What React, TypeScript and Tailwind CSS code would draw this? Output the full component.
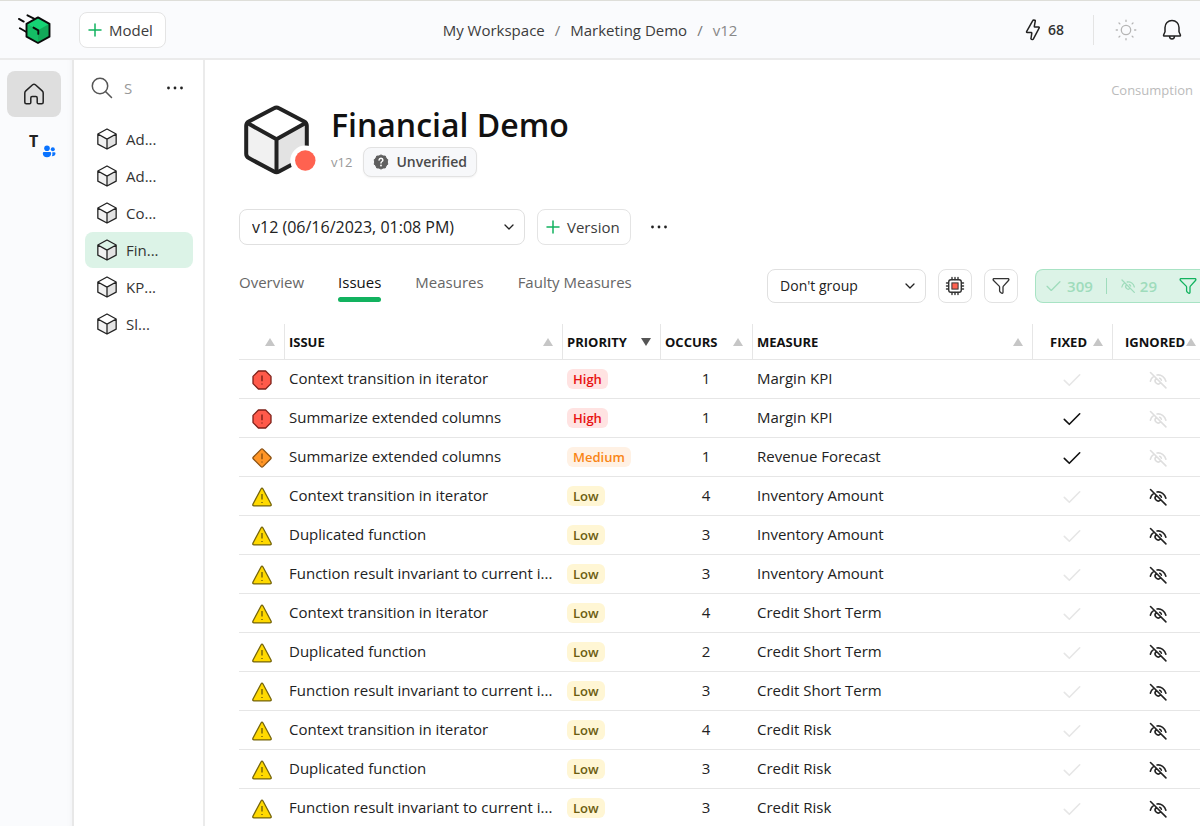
import React from "react";

type IconProps = { className?: string };

const Cube = ({ className }: IconProps) => (
  <svg viewBox="0 0 24 24" className={className} fill="none" stroke="#222" strokeWidth="1.4" strokeLinejoin="round" aria-hidden="true">
    <path d="M2 6.6 12 12v10.9L2 17.6Z" fill="#f1f1f1" stroke="none" />
    <path d="M22 6.6 12 12v10.9l10-5.3Z" fill="#e3e3e3" stroke="none" />
    <path d="M12 1.1 22 6.6v11L12 22.9 2 17.6v-11ZM2 6.6l10 5.6 10-5.6M12 12.2v10.7" />
  </svg>
);

const BigCube = ({ className }: IconProps) => (
  <svg viewBox="0 0 74 72" className={className} fill="none" aria-hidden="true">
    <path d="M4 18 34 34.500v32L4 50Z" fill="#f1f1f1" />
    <path d="M64 18 34 34.500v32L64 50Z" fill="#e3e3e3" />
    <path d="M4.500 17.800 34 34.300l29.500-16.500M34 34.300V66" stroke="#222" strokeWidth="4" />
    <path d="M31.500 3.200q2.500-1.400 5 0L61.700 16.500q2.600 1.400 2.600 4.300v28q0 2.900-2.600 4.300L36.500 66.600q-2.500 1.400-5 0L6.300 53.100q-2.600-1.400-2.600-4.300v-28q0-2.900 2.600-4.300Z" stroke="#222" strokeWidth="4" />
    <circle cx="62.800" cy="55.500" r="15" fill="#fff" />
    <circle cx="62.800" cy="55.500" r="10.200" fill="#ff6250" />
  </svg>
);

const Logo = ({ className }: IconProps) => (
  <svg viewBox="0 0 34 32" className={className} fill="none" strokeLinecap="round" strokeLinejoin="round" aria-hidden="true">
    <path d="M9.500 1.300 16 4.600M.9 4.900 5.700 7.600M1.900 14.300 8 17.800" stroke="#0a0a0a" strokeWidth="1.900" />
    <path d="M20 3.400 31.500 9.800v12.900L20 29 8.500 22.700V9.800Z" fill="#12a959" />
    <path d="M20 3.400 31.500 9.800 20 16.200 8.500 9.800Z" fill="#15d374" />
    <path d="M8.500 9.800 20 16.200V29L8.500 22.700Z" fill="#14bd65" />
    <path d="M20 3.400 31.500 9.800v12.900L20 29 8.500 22.700V9.800Z" stroke="#0a0a0a" strokeWidth="1.900" />
    <path d="M15.500 13.600 20.300 16.300v3.600" stroke="#0a0a0a" strokeWidth="1.900" />
  </svg>
);

const Plus = ({ className }: IconProps) => (
  <svg viewBox="0 0 14 14" className={className} stroke="#12b25f" strokeWidth="1.5" strokeLinecap="round" aria-hidden="true">
    <path d="M7 1v12M1 7h12" />
  </svg>
);

const Dots = ({ className }: IconProps) => (
  <svg viewBox="0 0 18 4" className={className} fill="#222" aria-hidden="true">
    <circle cx="2.500" cy="2" r="1.400" />
    <circle cx="9" cy="2" r="1.400" />
    <circle cx="15.500" cy="2" r="1.400" />
  </svg>
);

const Chevron = ({ className }: IconProps) => (
  <svg viewBox="0 0 12 8" className={className} fill="none" stroke="#222" strokeWidth="1.300" strokeLinecap="round" strokeLinejoin="round" aria-hidden="true">
    <path d="m2 2 4 4 4-4" />
  </svg>
);

const Home = ({ className }: IconProps) => (
  <svg viewBox="0 0 22 24" className={className} fill="none" stroke="#222" strokeWidth="1.500" strokeLinejoin="round" aria-hidden="true">
    <path d="M9.600 2.800q1.400-1.200 2.800 0l6.800 6.100q1 .9 1 2.200v9.200q0 1.500-1.500 1.500h-3.200q-1.300 0-1.300-1.300v-4.600q0-1.300-1.300-1.300H9.100q-1.300 0-1.300 1.300v4.600q0 1.300-1.300 1.300H3.300q-1.500 0-1.500-1.500v-9.200q0-1.300 1-2.200Z" />
  </svg>
);

const People = ({ className }: IconProps) => (
  <svg viewBox="0 0 14 13" className={className} fill="#0a73ff" aria-hidden="true">
    <circle cx="5" cy="3.300" r="2.800" />
    <circle cx="10.800" cy="4.200" r="2" />
    <path d="M2 7h6q1.200 0 1.200 1.200C9.200 11 7.500 12.300 5 12.300S.8 11 .8 8.200Q.8 7 2 7ZM10.300 7.200h2q1.200 0 1.200 1.100 0 2.900-3.700 3 .8-1.300.5-4.100Z" />
  </svg>
);

const Search = ({ className }: IconProps) => (
  <svg viewBox="0 0 22 22" className={className} fill="none" stroke="#555" strokeWidth="1.500" strokeLinecap="round" aria-hidden="true">
    <circle cx="9" cy="9" r="7.700" />
    <path d="m14.500 14.500 6 6" />
  </svg>
);

const Bolt = ({ className }: IconProps) => (
  <svg viewBox="0 0 16 22" className={className} fill="none" stroke="#222" strokeWidth="1.500" strokeLinejoin="round" aria-hidden="true">
    <path d="M7.900 1.400q.2-.5.700-.5l1.300.3q.5.200.4.700L9.300 7.400q0 .6.600.6h3.700q1 .2.500 1.100L8.300 20.200q-.3.500-.8.400l-1.100-.4q-.5-.2-.4-.7l.8-5.300q0-.7-.7-.7H2.200q-1-.2-.5-1.200Z" />
  </svg>
);

const Sun = ({ className }: IconProps) => (
  <svg viewBox="0 0 22 22" className={className} fill="none" stroke="#b5b5b5" strokeWidth="1.300" strokeLinecap="round" aria-hidden="true">
    <circle cx="11" cy="11" r="4.700" />
    <path d="M11 1.200v1.200M11 19.600v1.200M1.200 11h1.200M19.600 11h1.200M4 4l.9.900M17.100 17.100l.9.900M4 18l.9-.9M17.100 4.900 18 4" />
  </svg>
);

const Bell = ({ className }: IconProps) => (
  <svg viewBox="0 0 20 22" className={className} fill="none" stroke="#222" strokeWidth="1.500" strokeLinejoin="round" aria-hidden="true">
    <path d="M10 1.500c4 0 7 3 7 6.900v4.400l1.400 3.200q.3 1-.8 1H2.400q-1.100 0-.8-1L3 12.800V8.400c0-3.900 3-6.900 7-6.900ZM7.400 17.200q.4 2.900 2.600 2.900t2.600-2.900" />
  </svg>
);

const Funnel = ({ className }: IconProps) => (
  <svg viewBox="0 0 18 18" className={className} fill="none" stroke="currentColor" strokeWidth="1.300" strokeLinejoin="round" aria-hidden="true">
    <path d="M1.900 1.700h14.200q1.200.3.600 1.500l-5.300 5.900q-.4.500-.4 1.100v5.300q-.1.700-.8.900l-1.600-.9q-.9-.7-1-1.600v-3.700q0-.6-.4-1.100L1.300 3.200Q.7 2 1.900 1.700Z" />
  </svg>
);

const Chip = ({ className }: IconProps) => (
  <svg viewBox="0 0 20 20" className={className} fill="none" stroke="#333" strokeWidth="1.400" strokeLinecap="round" aria-hidden="true">
    <rect x="3.700" y="3.700" width="12.600" height="12.600" rx="2.200" />
    <path d="M7 1.500v2M13 1.500v2M7 16.500v2M13 16.500v2M1.500 7h2M1.500 13h2M16.500 7h2M16.500 13h2M10 1.500v2M10 16.500v2M1.500 10h2M16.500 10h2" />
    <rect x="6.900" y="6.900" width="6.200" height="6.200" fill="#ff6250" strokeWidth="1" />
  </svg>
);

const Check = ({ className }: IconProps) => (
  <svg viewBox="0 0 18 14" className={className} fill="none" stroke="currentColor" strokeWidth="1.600" strokeLinecap="round" strokeLinejoin="round" aria-hidden="true">
    <path d="m1.300 7.400 5 4.900L16.700 1.800" />
  </svg>
);

const EyeOff = ({ className }: IconProps) => (
  <svg viewBox="0 0 24 24" className={className} fill="none" stroke="currentColor" strokeWidth="1.900" strokeLinecap="round" aria-hidden="true">
    <path d="m3 3 18.500 18.500M2.800 13.500C3.300 11 4.700 9 6.800 7.600M10.800 6c5-.7 9.400 2.600 10.700 7.500M9.700 10.300a3.700 3.700 0 1 0 5.300 5.300M14 9.900q1.600.7 2 2.300" />
  </svg>
);

const Unverified = ({ className }: IconProps) => (
  <svg viewBox="0 0 16 16" className={className} aria-hidden="true">
    <path d="M8 .9 10 2l2.300.1.800 2.100 1.700 1.500L14.300 8l.5 2.200-1.700 1.600-.8 2.100-2.300.1L8 15.100 6 14l-2.300-.1-.8-2.100-1.700-1.600L1.700 8 1.200 5.700l1.700-1.500.8-2.100L6 2Z" fill="#5f5f5f" stroke="#5f5f5f" strokeLinejoin="round" />
    <path d="M6 6.100q.2-1.900 2-1.900 1.900.1 1.900 1.700 0 .9-1 1.600-.9.600-.9 1.600" fill="none" stroke="#fff" strokeWidth="1.400" strokeLinecap="round" />
    <circle cx="8" cy="11.500" r=".9" fill="#fff" />
  </svg>
);

type Level = "High" | "Medium" | "Low";

const Severity = ({ level }: { level: Level }) => {
  const shape = {
    High: { d: "M6.400 1h7.200L19 6.400v7.200L13.600 19H6.400L1 13.600V6.400Z", fill: "#ff5a4a", stroke: "#7d2019" },
    Medium: { d: "M9 1.400q1-1 2 0L18.600 9q1 1 0 2L11 18.600q-1 1-2 0L1.400 11q-1-1 0-2Z", fill: "#ff9526", stroke: "#8a5010" },
    Low: { d: "M9 2q1-1.600 2 0l8 15q.7 1.800-1 1.900H2Q.3 18.800 1 17Z", fill: "#ffd900", stroke: "#75640a" },
  }[level];
  const low = level === "Low";
  return (
    <svg viewBox="0 0 20 20" className="mx-auto mt-[3px] size-5" fill="none" role="img" aria-label={level}>
      <path d={shape.d} fill={shape.fill} stroke={shape.stroke} strokeWidth="1.300" strokeLinejoin="round" />
      <path d={low ? "M10 7v5.500M10 15v1" : "M10 5.500v5.800M10 13.600v1"} stroke={shape.stroke} strokeWidth="1.400" />
    </svg>
  );
};

const badge: Record<Level, string> = {
  High: "bg-[#ffe3e2] text-[#e81212]",
  Medium: "bg-[#fff1e4] text-[#f98516]",
  Low: "bg-[#fff6d4] text-[#6b5c10]",
};

type Row = { issue: string; level: Level; occurs: number; measure: string; fixed?: boolean };

const CTX = "Context transition in iterator";
const DUP = "Duplicated function";
const INV = "Function result invariant to current i...";

const rows: Row[] = [
  { issue: CTX, level: "High", occurs: 1, measure: "Margin KPI" },
  { issue: "Summarize extended columns", level: "High", occurs: 1, measure: "Margin KPI", fixed: true },
  { issue: "Summarize extended columns", level: "Medium", occurs: 1, measure: "Revenue Forecast", fixed: true },
  { issue: CTX, level: "Low", occurs: 4, measure: "Inventory Amount" },
  { issue: DUP, level: "Low", occurs: 3, measure: "Inventory Amount" },
  { issue: INV, level: "Low", occurs: 3, measure: "Inventory Amount" },
  { issue: CTX, level: "Low", occurs: 4, measure: "Credit Short Term" },
  { issue: DUP, level: "Low", occurs: 2, measure: "Credit Short Term" },
  { issue: INV, level: "Low", occurs: 3, measure: "Credit Short Term" },
  { issue: CTX, level: "Low", occurs: 4, measure: "Credit Risk" },
  { issue: DUP, level: "Low", occurs: 3, measure: "Credit Risk" },
  { issue: INV, level: "Low", occurs: 3, measure: "Credit Risk" },
];

const Sort = ({ active }: { active?: boolean }) => (
  <svg viewBox="0 0 10 8" className="h-2 w-[10px] shrink-0" aria-hidden="true">
    {active ? <path d="M0 0h10L5 8Z" fill="#555" /> : <path d="M0 8h10L5 0Z" fill="#c6c6c6" />}
  </svg>
);

const Th = ({ label, active, className = "pl-1 pr-[9px]" }: { label: string; active?: boolean; className?: string }) => (
  <th scope="col" aria-label={label || "Severity"} className="border-l border-[#e6e6e6] p-0 first:border-l-0">
    <div className={`flex items-center justify-between uppercase ${className}`}>
      <span>{label}</span>
      <Sort active={active} />
    </div>
  </th>
);

const Crumb = ({ children }: { children: React.ReactNode }) => (
  <a href="#" className="text-[#3c3c3c]">{children}</a>
);

const models = ["Ad...", "Ad...", "Co...", "Fin...", "KP...", "Sl..."];
const tabs = ["Overview", "Issues", "Measures", "Faulty Measures"];

export default function App() {
  return (
    <div className="flex h-screen flex-col overflow-hidden bg-white font-['Open_Sans','Noto_Sans',sans-serif] text-[15px] leading-5 text-[#222]">
      <header className="grid h-[60px] shrink-0 grid-cols-[1fr_auto_1fr] items-center border-t border-b-2 border-t-[#deded9] border-b-[#ebebeb] bg-[#fafbfd]">
        <div className="flex items-center pl-[18px]">
          <a href="#" aria-label="Home page"><Logo className="h-8 w-[34px]" /></a>
          <button className="ml-[27px] flex h-9 items-center gap-[7px] rounded-lg border border-[#e4e4e4] bg-white px-2 pr-3 text-[#3c3c3c]">
            <Plus className="size-[14px]" />
            Model
          </button>
        </div>
        <nav aria-label="Breadcrumb" className="flex items-center gap-[10px] pt-px pr-5">
          <Crumb>My Workspace</Crumb>
          <span className="text-[#777]">/</span>
          <Crumb>Marketing Demo</Crumb>
          <span className="text-[#777]">/</span>
          <span className="text-[#888]">v12</span>
        </nav>
        <div className="flex items-center justify-end pr-[18px]">
          <Bolt className="h-[22px] w-4" />
          <span className="ml-[7px] text-[14px] font-semibold text-[#333]">68</span>
          <span className="mr-[21px] ml-[29px] h-[30px] w-px bg-[#e4e4e4]" />
          <button aria-label="Theme"><Sun className="size-[22px]" /></button>
          <button aria-label="Notifications" className="ml-[25px]"><Bell className="h-[22px] w-5" /></button>
        </div>
      </header>

      <div className="flex min-h-0 flex-1">
        <aside className="flex w-[74px] shrink-0 flex-col items-start border-r-2 border-[#e8e8e8] bg-[#fafbfd] pl-[7px] pt-[11px] shadow-[inset_-6px_0_6px_-6px_#0000000d]">
          <button aria-label="Home" className="flex h-[46px] w-[54px] items-center justify-center rounded-lg bg-[#dedede]">
            <Home className="h-6 w-[22px]" />
          </button>
          <button aria-label="Team" className="mt-3 flex h-[30px] w-[54px] pl-[22px]">
            <span className="text-[16px] leading-6 font-bold">T</span>
            <People className="ml-1 mt-4 h-[13px] w-[14px]" />
          </button>
        </aside>

        <aside className="w-[131px] shrink-0 border-r-2 border-[#ebebeb] pr-[10px] pl-[11px] pt-[17px]">
          <div className="flex h-[22px] items-center pl-1.5 pr-[9px]">
            <Search className="size-[22px]" />
            <input aria-label="Search models" placeholder="Search" className="ml-[11px] w-2 bg-transparent text-[15px] outline-none placeholder:text-[#999]" />
            <button aria-label="More" className="ml-auto"><Dots className="h-1 w-[18px]" /></button>
          </div>
          <ul className="mt-[22px]">
            {models.map((m, i) => (
              <li key={i}>
                <a href="#" className={`mb-px flex h-9 items-center gap-2 rounded-lg pl-[11px] ${i === 3 ? "bg-[#dcf3e7]" : ""}`}>
                  <Cube className="size-[22px]" />
                  <span className="text-[#333]">{m}</span>
                </a>
              </li>
            ))}
          </ul>
        </aside>

        <main className="min-w-0 flex-1 overflow-hidden pl-[34px]">
          <div className="flex justify-between">
            <div className="flex pt-[45px] pl-[3px]">
              <BigCube className="h-[72px] w-[75px]" />
              <div className="ml-[14px]">
                <h1 className="mb-[2px] text-[32px] leading-10 font-semibold text-[#111]">Financial Demo</h1>
                <div className="flex items-center gap-[11px]">
                  <span className="text-[13px] text-[#999]">v12</span>
                  <button className="flex h-[30px] items-center gap-[7px] rounded-lg border border-[#e2e2e2] bg-[#f7f8fa] px-[9px] text-[14px] font-semibold text-[#4a4a4a] shadow-xs">
                    <Unverified className="size-4" />
                    Unverified
                  </button>
                </div>
              </div>
            </div>
            <a href="#" className="pt-5 pr-[7px] text-[13px] text-[#bbb]">Consumption</a>
          </div>

          <div className="mt-8 flex items-center gap-3">
            <div className="grid w-[286px] items-center">
              <select aria-label="Model version" className="col-start-1 row-start-1 h-9 w-full appearance-none rounded-lg border border-[#e0e0e0] bg-white px-3 text-[16px]">
                <option>v12 (06/16/2023, 01:08 PM)</option>
              </select>
              <Chevron className="pointer-events-none col-start-1 row-start-1 mr-[10px] h-2 w-3 justify-self-end" />
            </div>
            <button className="flex h-9 items-center gap-[7px] rounded-lg border border-[#e4e4e4] px-2 pr-[10px] text-[#3c3c3c]">
              <Plus className="size-[14px]" />
              Version
            </button>
            <button aria-label="More actions" className="ml-[7px]"><Dots className="h-1 w-[18px]" /></button>
          </div>

          <div className="mt-6 flex h-[34px] items-center justify-between">
            <nav className="flex gap-[34px] self-start pt-[3px]">
              {tabs.map((t) => (
                <a key={t} href="#" className={t === "Issues" ? "text-[#111]" : "text-[#666]"}>
                  {t}
                  {t === "Issues" && <span className="mt-[5px] block h-[5px] rounded-full bg-[#12b25f]" />}
                </a>
              ))}
            </nav>
            <div className="flex items-center gap-3 text-[14px]">
              <div className="grid w-[159px] items-center">
                <select aria-label="Group by" className="col-start-1 row-start-1 h-[34px] w-full appearance-none rounded-lg border border-[#e0e0e0] bg-white px-3 text-[14px]">
                  <option>Don't group</option>
                </select>
                <Chevron className="pointer-events-none col-start-1 row-start-1 mr-[10px] h-2 w-3 justify-self-end" />
              </div>
              <button aria-label="Engine" className="flex size-[34px] items-center justify-center rounded-lg border border-[#e2e2e2]">
                <Chip className="size-5" />
              </button>
              <button aria-label="Filter" className="flex size-[34px] items-center justify-center rounded-lg border border-[#e2e2e2] text-[#333]">
                <Funnel className="size-[18px]" />
              </button>
              <button className="ml-[5px] flex h-[34px] items-center rounded-l-lg border border-r-0 border-[#a8e3c4] bg-[#dcf3e7] pl-[10px] pr-[3px] text-[15px] font-semibold text-[#9fdcbc]">
                <Check className="h-3 w-[15px]" />
                <span className="ml-[6px]">309</span>
                <span className="mx-[13px] h-4 w-px bg-[#9fdcbc]" />
                <EyeOff className="size-4" />
                <span className="ml-[4px]">29</span>
                <Funnel className="ml-[22px] size-[18px] text-[#12b25f]" />
              </button>
            </div>
          </div>

          <table className="mt-[21px] w-full table-fixed border-separate border-spacing-0 text-left">
            <colgroup>
              <col className="w-[45px]" />
              <col className="w-[278px]" />
              <col className="w-[98px]" />
              <col className="w-[92px]" />
              <col />
              <col className="w-[80px]" />
              <col className="w-[88px]" />
            </colgroup>
            <thead>
              <tr className="h-9 text-[13px] text-[#111] [&>th]:border-b [&>th]:border-b-[#e6e6e6]">
                <Th label="" />
                <Th label="Issue" />
                <Th label="Priority" active />
                <Th label="Occurs" />
                <Th label="Measure" />
                <Th label="Fixed" className="pl-[17px] pr-[9px]" />
                <Th label="Ignored" className="pl-3 pr-1" />
              </tr>
            </thead>
            <tbody>
              {rows.map((r, i) => (
                <tr key={i} className="h-[39px] [&>td]:border-b [&>td]:border-[#e6e6e6] [&>td]:p-0 [&>td]:pb-[2px]">
                  <td><Severity level={r.level} /></td>
                  <td><div className="truncate pl-[5px]">{r.issue}</div></td>
                  <td>
                    <div className="flex pt-[2px] pl-[5px]">
                      <span className={`rounded-md px-[6px] text-[13px] font-semibold ${badge[r.level]}`}>{r.level}</span>
                    </div>
                  </td>
                  <td className="text-center">{r.occurs}</td>
                  <td><div className="truncate pl-[5px]">{r.measure}</div></td>
                  <td><Check className={`mx-auto mt-[3px] h-[14px] w-[18px] ${r.fixed ? "text-[#111]" : "text-[#e6e6e6]"}`} /></td>
                  <td><EyeOff className={`mt-[3px] ml-9 size-5 ${r.level === "Low" ? "text-[#222]" : "text-[#dedede]"}`} /></td>
                </tr>
              ))}
            </tbody>
          </table>
        </main>
      </div>
    </div>
  );
}
